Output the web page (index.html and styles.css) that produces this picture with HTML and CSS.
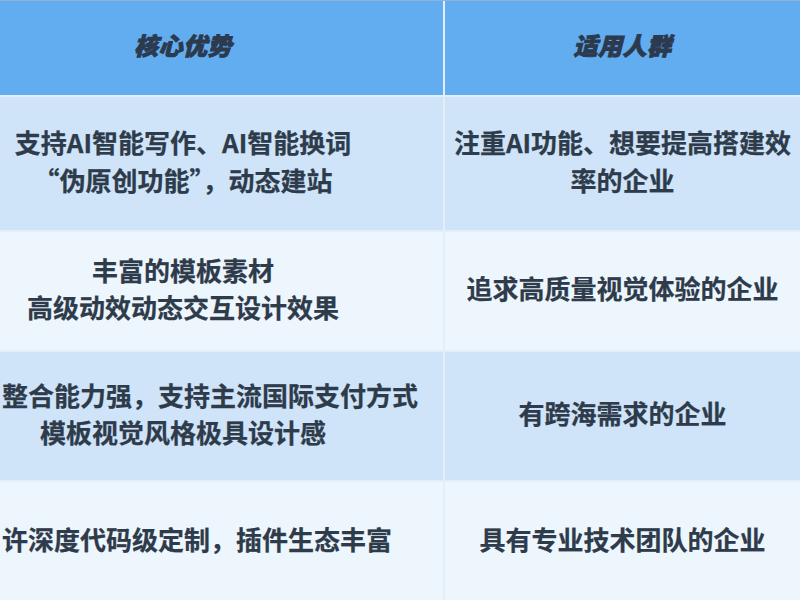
FILE: index.html
```html
<!DOCTYPE html>
<html lang="zh-CN">
<head>
<meta charset="utf-8">
<link rel="stylesheet" href="styles.css">
</head>
<body>
<div class="table">
  <div class="cell head left"><div class="inner">核心优势</div></div>
  <div class="cell head right"><div class="inner">适用人群</div></div>

  <div class="cell odd left r1"><div class="inner"><span>支持AI智能写作、AI智能换词</span><span>“伪原创功能”，动态建站</span></div></div>
  <div class="cell odd right r1"><div class="inner"><span>注重AI功能、想要提高搭建效</span><span>率的企业</span></div></div>

  <div class="cell even left r2"><div class="inner"><span>丰富的模板素材</span><span>高级动效动态交互设计效果</span></div></div>
  <div class="cell even right r2"><div class="inner"><span>追求高质量视觉体验的企业</span></div></div>

  <div class="cell odd left r3"><div class="inner"><span class="shift">整合能力强，支持主流国际支付方式</span><span>模板视觉风格极具设计感</span></div></div>
  <div class="cell odd right r3"><div class="inner"><span>有跨海需求的企业</span></div></div>

  <div class="cell even left r4"><div class="inner"><span class="shift-sm">许深度代码级定制，插件生态丰富</span></div></div>
  <div class="cell even right r4"><div class="inner"><span>具有专业技术团队的企业</span></div></div>
</div>
</body>
</html>
```

FILE: styles.css
```css
html, body {
  margin: 0;
  padding: 0;
  width: 800px;
  height: 600px;
  overflow: hidden;
  background: #eef6fd;
}

.table {
  display: grid;
  grid-template-columns: 443px 355px;
  grid-template-rows: 94px 133px 118px 128px 120px;
  column-gap: 2px;
  row-gap: 2px;
  background: #e2effb;
  border-top: 1px solid #8fb3d4;
  font-family: "Noto Sans CJK SC", "Noto Sans", sans-serif;
  color: #2e3b4b;
}

.cell {
  display: flex;
  align-items: center;
  justify-content: center;
  min-width: 0;
}

.head {
  background: #62acf0;
}

.head .inner {
  font-size: 24px;
  font-weight: 900;
  font-style: italic;
  color: #2b3a4e;
  letter-spacing: 0.5px;
  -webkit-text-stroke: 0.9px #2b3a4e;
}

.odd {
  background: #cfe4f8;
}

.even {
  background: #eef6fd;
}

.inner {
  display: flex;
  flex-direction: column;
  align-items: center;
  white-space: nowrap;
  font-size: 26px;
  font-weight: 700;
  line-height: 37.5px;
  padding-bottom: 6px;
  -webkit-text-stroke: 0.25px #2e3b4b;
}

.left .inner {
  width: 520px;
  margin-left: -77px;
  flex-shrink: 0;
}

.right .inner {
  width: 355px;
}

.shift {
  padding-left: 54px;
}

.shift-sm {
  padding-left: 28px;
}
```
